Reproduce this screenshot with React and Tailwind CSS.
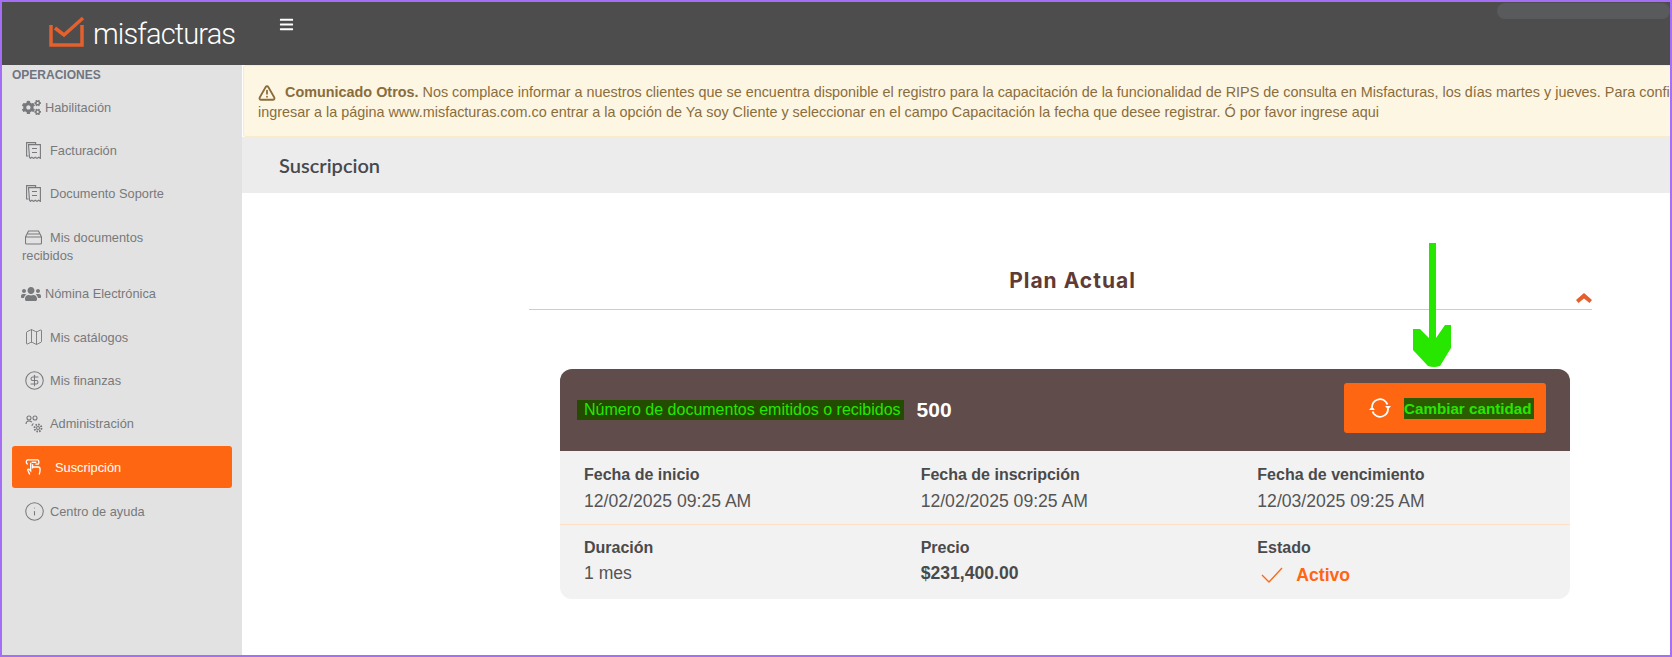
import { CircleDollarSign, Info, Map, TriangleAlert } from 'lucide-react';
import { FaBars, FaCogs, FaUsers } from 'react-icons/fa';

const DocIcon = () => (
  <svg width="15" height="17" viewBox="0 0 15 17" fill="none" stroke="currentColor" strokeWidth="1.1">
    <path d="M2.500 14H.6V.6h9v2" />
    <path d="M2.500 2.600h11.900v13.800l-1.700-1.200-1.700 1.200-1.700-1.200-1.700 1.200-1.700-1.200-1.400 1.200-1-1.200z" />
    <path d="M6 6.500h5M6 10.500h5" />
  </svg>
);

const InboxIcon = () => (
  <svg width="17" height="15" viewBox="0 0 17 15" fill="none" stroke="currentColor" strokeWidth="1.1">
    <path d="M3.500 1h10l3 6v6a1 1 0 0 1-1 1h-14a1 1 0 0 1-1-1V7z" />
    <path d="M.5 7h16M2.500 4h12" />
  </svg>
);

const AdminIcon = () => (
  <svg width="18" height="18" viewBox="0 0 18 18" fill="none" stroke="currentColor" strokeWidth="1.1">
    <circle cx="4" cy="3" r="2" />
    <circle cx="10" cy="3" r="2" />
    <path d="M1 9c0-2 1.500-3 3-3s2 .5 3 1M7 11c0-1 .5-2 1.500-2.500" />
    <circle cx="13" cy="13" r="1.500" />
    <circle cx="13" cy="13" r="3.500" strokeWidth="1.800" strokeDasharray="1.600 1.100" />
  </svg>
);

const HandIcon = () => (
  <svg width="17" height="17" viewBox="0 0 18 18" fill="none" stroke="currentColor" strokeWidth="1.400">
    <path d="M3 5.500C1 5.500 .8 1 3 1h10.500c1.500 0 1.500 4 .5 4.500H11" />
    <path d="M7 3.500h5" />
    <path d="M6 4v8.500L4.500 11c-1-.8-2 .2-1.500 1l2 4.500M8 5.500v4.500M8 8.500h6c1.500 0 2 1 2 2.500 0 2-.5 4-1 5.500" />
  </svg>
);

const SyncIcon = () => (
  <svg width="24" height="22" viewBox="0 0 24 22" fill="none" stroke="white" strokeWidth="1.800">
    <path d="M4 10a8 8 0 0 1 14-5l1.500 2.500" />
    <path d="M20 12a8 8 0 0 1-14 5l-1.500-2.500" />
    <path d="M17 9h6l-3 3.500zM1 13h6l-3-3.500z" fill="white" stroke="none" />
  </svg>
);

const menu = [
  { label: 'Habilitación', icon: <FaCogs size={19} />, gap: 'gap-[4px]', pad: 'pl-[20px]' },
  { label: 'Facturación', icon: <DocIcon />, gap: 'gap-[9px]', pad: 'pl-[24px]' },
  { label: 'Documento Soporte', icon: <DocIcon />, gap: 'gap-[9px]', pad: 'pl-[24px]' },
];

const menu2 = [
  { label: 'Nómina Electrónica', icon: <FaUsers size={20} />, gap: 'gap-[4px]', pad: 'pl-[19px]' },
  { label: 'Mis catálogos', icon: <Map size={20} strokeWidth={1.1} />, gap: 'gap-[6px]', pad: 'pl-[22px]' },
  { label: 'Mis finanzas', icon: <CircleDollarSign size={21} strokeWidth={1.2} />, gap: 'gap-[5px]', pad: 'pl-[22px]' },
  { label: 'Administración', icon: <AdminIcon />, gap: 'gap-[7px]', pad: 'pl-[23px]' },
];

const dates = [
  { label: 'Fecha de inicio', value: '12/02/2025 09:25 AM' },
  { label: 'Fecha de inscripción', value: '12/02/2025 09:25 AM' },
  { label: 'Fecha de vencimiento', value: '12/03/2025 09:25 AM' },
];

const MenuItem = ({ item }) => (
  <div className={`flex h-[43.2px] items-center text-[12.8px] text-[#77797c] ${item.gap} ${item.pad}`}>
    {item.icon}
    <span>{item.label}</span>
  </div>
);

export default function App() {
  return (
    <div className="relative flex h-[657px] w-[1672px] flex-col overflow-hidden border-2 border-[#a46ff5] bg-white font-['Liberation_Sans',Arial,sans-serif]">
      {/* top bar */}
      <header className="flex h-[63px] shrink-0 items-start bg-[#4d4d4d]">
        <div className="flex w-[277px] items-start pl-[47px] pt-[14px]">
          <svg width="36" height="32" viewBox="0 0 36 32" fill="none" stroke="#e4602c" strokeWidth="3.500">
            <path d="M2 9v20h31V9" />
            <path d="M6 12l9 7L34 2" />
          </svg>
          <span className="ml-[8px] mt-[1px] font-['Roboto',sans-serif] text-[29px] leading-[34px] font-light tracking-[-0.87px] text-white">misfacturas</span>
        </div>
        <div className="pt-[15px] text-white">
          <FaBars size={15} />
        </div>
      </header>

      <div className="flex min-h-0 flex-1">
        {/* sidebar */}
        <aside className="w-[240px] shrink-0 bg-[#e2e2e2]">
          <div className="pl-[10px] pt-[1px] text-[12px] leading-[18px] font-bold text-[#6f7580]">OPERACIONES</div>
          <div className="mt-[2px]">
            {menu.map((item) => (
              <MenuItem key={item.label} item={item} />
            ))}
            <div className="h-[56.8px] pl-[20px] pt-[13px] text-[12.8px] leading-[18px] text-[#77797c]">
              <div className="flex h-[18px] items-center gap-[8px] pl-[3px]">
                <InboxIcon />
                <span>Mis documentos</span>
              </div>
              <div>recibidos</div>
            </div>
            {menu2.map((item) => (
              <MenuItem key={item.label} item={item} />
            ))}
            <div className="mx-[10px] mt-px flex h-[42px] items-center gap-[13px] rounded-[3px] bg-[#ff6612] pl-[13px] text-[12.8px] text-white">
              <HandIcon />
              <span>Suscripción</span>
            </div>
            <div className="flex h-[47px] items-center gap-[5px] pl-[22px] text-[12.8px] text-[#77797c]">
              <Info size={21} strokeWidth={1.2} />
              <span>Centro de ayuda</span>
            </div>
          </div>
        </aside>

        <main className="min-w-0 flex-1">
          {/* notice */}
          <div className="ml-px h-[72px] overflow-hidden whitespace-nowrap rounded-l-[3px] border border-r-0 border-[#faebcc] bg-[#fdf6e3] pl-[14px] pt-[16px] text-[14.4px] leading-[21px] text-[#8a6d3b]">
            <div className="flex items-center">
              <TriangleAlert size={18} strokeWidth={2.4} className="mr-[9px] shrink-0" />
              <span className="shrink-0 font-bold">Comunicado Otros.</span>
              <span className="shrink-0">&nbsp;Nos complace informar a nuestros clientes que se encuentra disponible el registro para la capacitación de la funcionalidad de RIPS de consulta en Misfacturas, los días martes y jueves. Para confirmar</span>
            </div>
            <div className="-mt-px">ingresar a la página www.misfacturas.com.co entrar a la opción de Ya soy Cliente y seleccionar en el campo Capacitación la fecha que desee registrar. Ó por favor ingrese aqui</div>
          </div>

          {/* page title */}
          <div className="flex h-[56px] items-center bg-[#ececec] pl-[37px] font-['Lato',sans-serif] text-[20px] font-semibold text-[#46494e]">
            Suscripcion
          </div>

          {/* plan section */}
          <section className="ml-[287px] w-[1063px]">
            <div className="relative mt-[69px] h-[48px] border-b border-[#cccccc]">
              <h2 className="pl-[24px] text-center font-['Inter',sans-serif] text-[21px] leading-[38px] font-bold tracking-[1px] text-[#5f3b36]">Plan Actual</h2>
              <svg className="absolute right-0 top-[31px]" width="16" height="11" viewBox="0 0 16 11" fill="#e4602c">
                <path d="M8 0l8 7-2.500 3L8 5.500 2.500 10 0 7z" />
              </svg>
            </div>

            <div className="ml-[31px] mt-[59px] w-[1010px] overflow-hidden rounded-[12px] bg-[#f2f2f2]">
              <div className="flex h-[82px] items-center justify-between bg-[#604c4b] pl-[17px] pr-[24px]">
                <div className="flex items-center">
                  <span className="bg-[#234c00] pl-[7px] pr-[3px] text-[16px] leading-[20px] text-[#27e600]">Número de documentos emitidos o recibidos</span>
                  <span className="ml-[13px] text-[21px] font-bold text-white">500</span>
                </div>
                <button className="mb-[4px] flex h-[50px] w-[202px] items-center rounded-[3px] bg-[#ff6612] pl-[24px]">
                  <SyncIcon />
                  <span className="ml-[12px] w-[130px] bg-[#2c5c00] text-left text-[15.2px] leading-[21px] font-bold whitespace-nowrap text-[#27e600]">Cambiar cantidad</span>
                </button>
              </div>

              <div className="grid h-[74px] grid-cols-3 border-b border-[#ffe0c7] pt-[12px]">
                {dates.map((cell) => (
                  <div key={cell.label} className="pl-[24px]">
                    <div className="text-[16px] leading-[24px] font-bold text-[#4a4a4a]">{cell.label}</div>
                    <div className="mt-[2px] text-[17.6px] leading-[25px] text-[#555555]">{cell.value}</div>
                  </div>
                ))}
              </div>

              <div className="grid h-[74px] grid-cols-3 pt-[11px]">
                <div className="pl-[24px]">
                  <div className="text-[16px] leading-[24px] font-bold text-[#4a4a4a]">Duración</div>
                  <div className="text-[17.6px] leading-[26px] text-[#555555]">1 mes</div>
                </div>
                <div className="pl-[24px]">
                  <div className="text-[16px] leading-[24px] font-bold text-[#4a4a4a]">Precio</div>
                  <div className="text-[17.6px] leading-[26px] font-bold text-[#4a4a4a]">$231,400.00</div>
                </div>
                <div className="pl-[24px]">
                  <div className="text-[16px] leading-[24px] font-bold text-[#4a4a4a]">Estado</div>
                  <div className="mt-[2px] flex items-center pl-[3px] text-[17.6px] leading-[26px] font-bold text-[#ff6612]">
                    <svg width="24" height="18" viewBox="0 0 24 18" fill="none" stroke="#ff6612" strokeWidth="1.300">
                      <path d="M2 9l7 7L22 2" />
                    </svg>
                    <span className="ml-[12px]">Activo</span>
                  </div>
                </div>
              </div>
            </div>
          </section>
        </main>
      </div>

      {/* annotation and smudge drawn over the capture */}
      <div className="absolute right-0 top-px h-[16px] w-[173px] rounded-[8px] bg-[#595a5b]" />
      <svg className="absolute left-[1411px] top-[241px]" width="38" height="125" viewBox="0 0 38 125" fill="#27e600">
        <path d="M16 0h7v95l9-13h6v23l-11 18q-6 2-12 0L0 107V86h7l9 9z" />
      </svg>
    </div>
  );
}
